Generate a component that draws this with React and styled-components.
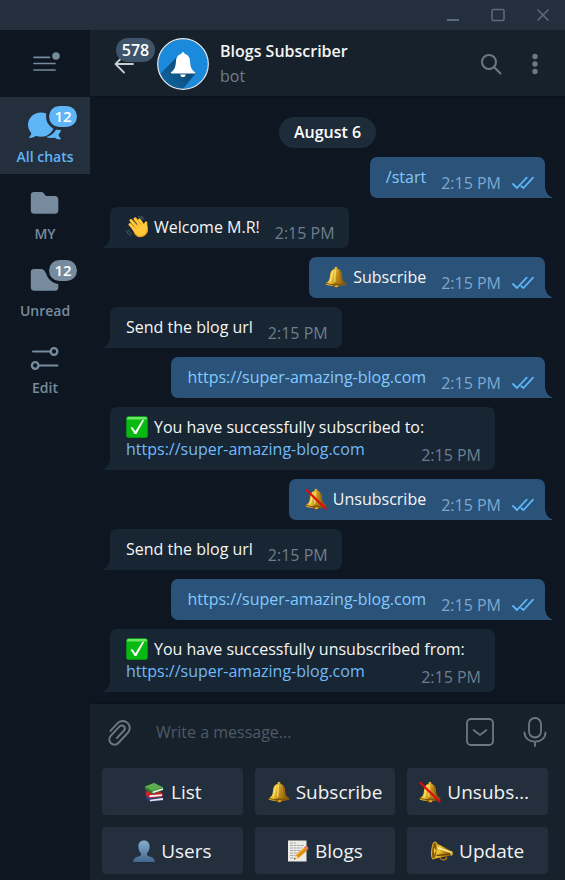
import React from "react";
import styled, { createGlobalStyle, css } from "styled-components";

const color = {
  frame: "#242f3d",
  panel: "#17212b",
  chat: "#0e1621",
  line: "#0b121b",
  incoming: "#182533",
  outgoing: "#2b5278",
  accent: "#5eb5f7",
  link: "#70bafa",
  muted: "#768c9e",
  dim: "#6d7f8f",
};

const GlobalStyle = createGlobalStyle`
  *, *::before, *::after { box-sizing: border-box; }
  body {
    margin: 0;
    background: ${color.chat};
    color: #f5f5f5;
    font: 400 16px/22px "Open Sans", "Noto Sans", sans-serif;
  }
  button, input { font: inherit; color: inherit; }
  svg { display: block; flex: none; }
`;

const Window = styled.div`
  display: flex;
  flex-direction: column;
  min-height: 100vh;
`;

const TitleBar = styled.div`
  display: flex;
  justify-content: flex-end;
  height: 30px;
  background: ${color.frame};
  color: #5c6b79;
`;

const IconButton = styled.button`
  display: flex;
  align-items: center;
  justify-content: center;
  width: ${(p) => p.$width || 44}px;
  height: ${(p) => p.$height || 44}px;
  padding: 0;
  border: 0;
  background: none;
  color: inherit;
  cursor: pointer;
`;

const Body = styled.div`
  display: grid;
  grid-template-columns: 90px minmax(0, 1fr);
  flex: 1;
`;

const Sidebar = styled.nav`
  display: flex;
  flex-direction: column;
  color: ${color.muted};
`;

const FolderButton = styled.button`
  position: relative;
  display: flex;
  flex-direction: column;
  align-items: center;
  gap: 4px;
  height: 77px;
  padding: 14px 0 0;
  border: 0;
  background: ${(p) => (p.$active ? color.frame : color.chat)};
  color: ${(p) => (p.$active ? color.accent : color.muted)};
  font-size: 14px;
  line-height: 20px;
  font-weight: 600;
  cursor: pointer;
`;

const FolderBadge = styled.span`
  position: absolute;
  top: 9px;
  right: 13px;
  min-width: 28px;
  border-radius: 11px;
  background: ${(p) => (p.$active ? color.accent : color.muted)};
  box-shadow: 0 0 0 3px ${(p) => (p.$active ? color.frame : color.chat)};
  color: #fff;
  font-size: 15px;
  line-height: 21px;
  text-align: center;
`;

const Main = styled.main`
  display: flex;
  flex-direction: column;
  min-width: 0;
`;

const Header = styled.header`
  display: flex;
  align-items: center;
  height: 67px;
  padding: 0 8px 0 12px;
  background: ${color.panel};
  color: #6c7883;
`;

const BackButton = styled.button`
  position: relative;
  display: flex;
  align-items: center;
  width: 55px;
  height: 52px;
  padding: 0 0 0 12px;
  border: 0;
  background: none;
  color: #c9cdd1;
  cursor: pointer;
`;

const BackBadge = styled.span`
  position: absolute;
  top: 0;
  left: 14px;
  width: 39px;
  border-radius: 12px;
  background: #3e546a;
  color: #fff;
  font-size: 16px;
  line-height: 24px;
  font-weight: 600;
  text-align: center;
`;

const Peer = styled.div`
  flex: 1;
  min-width: 0;
  padding-left: 11px;
`;

const PeerName = styled.h1`
  margin: 0 0 3px;
  color: #f5f5f5;
  font-size: 16px;
  line-height: 22px;
  font-weight: 600;
`;

const PeerStatus = styled.div`
  color: ${color.dim};
`;

const Messages = styled.section`
  display: flex;
  flex: 1;
  flex-direction: column;
  align-items: flex-start;
  gap: 9px;
  padding: 20px 20px 11px;
  border-top: 1px solid ${color.line};
  margin-top: -1px;
`;

const DatePill = styled.time`
  align-self: center;
  padding: 0 15px;
  border-radius: 16px;
  background: #1e2c3a;
  color: #fff;
  line-height: 31px;
  font-weight: 600;
`;

const outgoing = css`
  align-self: flex-end;
  padding-right: 11px;
  border-radius: 7px 7px 0 7px;
  &::after {
    left: 100%;
    background: radial-gradient(ellipse 7px 11px at 100% 0, transparent 96%, ${color.outgoing});
  }
`;

const incoming = css`
  padding-right: 14px;
  border-radius: 7px 7px 7px 0;
  &::after {
    right: 100%;
    background: radial-gradient(ellipse 7px 11px at 0 0, transparent 96%, ${color.incoming});
  }
`;

const Bubble = styled.article`
  position: relative;
  min-width: ${(p) => (p.$wide ? "min(385px, 100%)" : "0")};
  padding: 9px 0 4px 16px;
  background: ${(p) => (p.$out ? color.outgoing : color.incoming)};
  &::after {
    content: "";
    position: absolute;
    bottom: 0;
    width: 7px;
    height: 12px;
  }
  ${(p) => (p.$out ? outgoing : incoming)}
`;

const TextLine = styled.div`
  display: flex;
  align-items: center;
  gap: 6px;
  min-height: 22px;
`;

const LastLine = styled.div`
  display: flex;
  align-items: flex-start;
  justify-content: space-between;
  gap: 15px;
`;

const Link = styled.a`
  color: ${(p) => (p.$out ? "#83caff" : color.link)};
  text-decoration: none;
`;

const Meta = styled.div`
  display: flex;
  align-items: center;
  gap: 11px;
  margin-top: 6px;
  color: ${(p) => (p.$out ? "#7da8d3" : color.dim)};
  white-space: nowrap;
`;

const Composer = styled.footer`
  padding: 0 17px 6px 12px;
  border-top: 1px solid ${color.line};
  background: ${color.panel};
  color: #6c7883;
`;

const InputRow = styled.form`
  display: flex;
  align-items: center;
  height: 56px;
  margin: 0 -14px 8px -4px;
`;

const MessageInput = styled.input`
  flex: 1;
  min-width: 0;
  padding: 0 0 0 14px;
  border: 0;
  outline: 0;
  background: none;
  color: #f5f5f5;
  &::placeholder { color: #4e5a66; opacity: 1; }
`;

const Keyboard = styled.div`
  display: grid;
  grid-template-columns: repeat(3, minmax(0, 1fr));
  gap: 12px;
`;

const KeyButton = styled.button`
  display: flex;
  align-items: center;
  justify-content: center;
  gap: 6px;
  height: 47px;
  padding: 0 12px;
  border: 0;
  border-radius: 4px;
  background: ${color.frame};
  color: #f0f2f4;
  font-size: 19px;
  line-height: 28px;
  font-weight: 500;
  cursor: pointer;
`;

const KeyLabel = styled.span`
  min-width: 0;
  overflow: hidden;
  text-overflow: ellipsis;
  white-space: nowrap;
`;

const stroke = { fill: "none", stroke: "currentColor", strokeLinecap: "round", strokeLinejoin: "round" };

const Ticks = () => (
  <svg width="22" height="22" viewBox="0 0 22 22" {...stroke} stroke={color.accent} strokeWidth="1.800" role="img" aria-label="Read">
    <path d="M1 12 5 16 14.700 5.700M9.300 14.300 11.500 16 21 5.700" />
  </svg>
);

const BellArt = () => (
  <g>
    <path d="M11 .8c-1.200 0-1.500 1-1.400 2-3.200.9-4.600 3.600-4.700 7.200-.1 3.700-1.400 5.600-4.200 7.200-.5.7 0 1.500 1.300 1.900 5.400 1.300 12.600 1.300 18 0 1.300-.4 1.800-1.200 1.300-1.900-2.800-1.600-4.100-3.500-4.200-7.200-.1-3.600-1.500-6.300-4.700-7.200.1-1-.2-2-1.400-2z" fill="url(#gold)" />
    <ellipse cx="11" cy="19.200" rx="3" ry="2" fill="#8a5c0b" />
    <ellipse cx="11.500" cy="20" rx="1.800" ry="1.200" fill="#e0a624" />
    <path d="M1 17.400c5 1.800 15 1.800 20 0" stroke="#7d5307" strokeWidth="1" fill="none" />
    <path d="M8 5c-1.500 2.500-1 7-2.800 10.500M10.500 4c-.7 3.500-.4 8-.8 12" stroke="#fff08a" strokeWidth="1.200" fill="none" opacity=".75" />
    <path d="M15 5c1.200 3 .5 7 3 11" stroke="#7d5307" strokeWidth="1" fill="none" opacity=".6" />
  </g>
);

const emojiArt = {
  bell: <BellArt />,
  mute: (
    <g>
      <BellArt />
      <path d="M1.500 2 20.500 20.500" stroke="#e20a12" strokeWidth="2.200" strokeLinecap="round" />
    </g>
  ),
  check: (
    <g>
      <rect x=".3" y=".3" width="21.400" height="21.400" rx="2.500" fill="#07b910" />
      <path d="M1 3.500V2.500Q1 1 2.500 1h17Q21 1 21 2.500v1z" fill="#6be468" />
      <path d="M4.500 11.500c1-.6 2-.2 2.600.6l2.200 3.200L16 4.500c.5-.8 1.400-.8 2.200-.4L10.400 18H8.600z" fill="#fff" />
    </g>
  ),
  wave: (
    <g>
      <g fill="none" strokeLinecap="round" stroke="#ffc83a" strokeWidth="3">
        <path d="M4 8.500l6 6.500M5 4.500l7 8M9 2.800l6 7.500M13.500 4l4 6" />
      </g>
      <path d="M5.500 12 14.500 6.500l3.500 3.800c-.2-1.800.1-3.800 1.600-4.700 1-.5 1.900.1 1.700 1.200-.5 2.300 1.200 5.100.2 8.600-1.100 4-5.300 6.400-9 5.200-2.300-.8-4.700-4.300-7-8.600z" fill="#ffc83a" />
      <path d="M8 16.500c1.800 2.500 3.200 4.200 5.200 4.200 4 .2 7.500-2.600 8.200-6" fill="none" stroke="#e79a1c" strokeWidth="1.200" />
      <path d="M5.500 7.600l4.800 5.400M7.500 4.800l5.200 6M11.500 4l4 5.200" fill="none" stroke="#d8901c" strokeWidth=".7" />
      <path d="M.8 15c.6 2 1.800 3.500 3.600 4.500M2.800 14.500c.5 1.400 1.300 2.300 2.600 3.100M12.500.8c1.700.2 3 1 4 2.400M15 .4c1.300.5 2.200 1.200 2.800 2.300" fill="none" stroke="#5c6b77" strokeWidth=".9" strokeLinecap="round" />
    </g>
  ),
  books: (
    <g transform="translate(1 1)">
      <path d="M2 14.500 15.500 13l4 3.200-.4 2.300L6 20l-4-3z" fill="#2c3f78" />
      <path d="M6 17.700 19 16v1.900L6 19.200z" fill="#e9e9ef" />
      <path d="M1.500 9.200 15 8.500l3.800 3.500-.3 2.800L5.200 16.200 1.500 13z" fill="#c7232c" />
      <path d="M5.500 13.200 18 12.200v1.900L5.500 15.200z" fill="#f4f1ef" />
      <path d="M.8 4.500 10 1l9.200 4.500v2.800L8.500 12 .8 7.200z" fill="#2e7d32" />
      <path d="M.8 4.500 10 1l9.200 4.500L8.300 9z" fill="#5cad4c" />
      <path d="M8.700 9.600 19 6.300v1.500L8.700 11.200z" fill="#f3f5ef" />
    </g>
  ),
  user: (
    <g>
      <path d="M11 .6c-3.700 0-5.800 2.700-5.600 6.300.2 3 1.200 5.200 2.600 6.400.4 1.800-.3 2.500-2.600 3.200C2.200 17.500.5 18.500.2 22h21.600c-.3-3.500-2-4.500-5.200-5.500-2.300-.7-3-1.400-2.600-3.200 1.400-1.200 2.400-3.400 2.600-6.400C16.800 3.300 14.700.6 11 .6z" fill="url(#person)" />
    </g>
  ),
  memo: (
    <g>
      <rect x="1" y=".5" width="18.500" height="21" fill="#eceae6" />
      <path d="M3 3h6M3 5.500h14M3 8h12M3 10.500h13M3 13h8M3 15.500h6M3 18h4" stroke="#9a9a9a" strokeWidth=".8" strokeDasharray="3 .6" />
      <path d="M7 19.500 8.800 15 17 7.500l3 3L11.500 18z" fill="#f2b21d" />
      <path d="M9 15.800 18 8.500l1.900 2L11 18.200z" fill="#dd8f12" />
      <path d="M17 7.500l1.300-1.300c1.800-.6 3.500 1 3 2.800L20 10.500z" fill="#e8716b" />
      <path d="M7 19.500 8.800 15l2.700 3z" fill="#f3d9a8" />
      <path d="M7 19.500l.7-1.700 1 1.100z" fill="#222" />
    </g>
  ),
  horn: (
    <g>
      <path d="M8.500 16c.5 3 2.500 4.200 4.800 3.800 1.700-.3 2.400-1.500 2.200-3" fill="none" stroke="#b17a0c" strokeWidth="1.300" />
      <path d="M3.800 2.500 20.500 11c1.800.8 1.600 4.400-.2 4.600L2.500 18.800z" fill="url(#gold)" />
      <path d="M6 7.500l14.500 5" stroke="#fff3a0" strokeWidth="1.400" />
      <path d="M5 15.500l15-1.500" stroke="#6c4906" strokeWidth="1.500" />
      <ellipse cx="3.300" cy="10.500" rx="2.600" ry="8.500" transform="rotate(6 3.300 10.500)" fill="#8b5f0a" stroke="#e8b42e" strokeWidth="1" />
      <path d="M3 7.500 5 10.800l-2 3.500" fill="#f7d048" />
      <ellipse cx="20.500" cy="13.300" rx="1.200" ry="2.400" fill="#e8b42e" />
    </g>
  ),
};

const Emoji = ({ name }) => (
  <svg width="22" height="22" viewBox="0 0 22 22" aria-hidden="true">
    {emojiArt[name]}
  </svg>
);

const Gradients = () => (
  <svg width="0" height="0" aria-hidden="true">
    <defs>
      <linearGradient id="gold" x1="0" x2="1" y1="0" y2=".3">
        <stop offset="0" stopColor="#b77c0c" />
        <stop offset=".4" stopColor="#f0c93a" />
        <stop offset=".65" stopColor="#c08a18" />
        <stop offset="1" stopColor="#8a620e" />
      </linearGradient>
      <linearGradient id="person" x1="0" x2="0" y1="0" y2="1">
        <stop offset="0" stopColor="#84aed0" />
        <stop offset="1" stopColor="#42678e" />
      </linearGradient>
    </defs>
  </svg>
);

const folderIcons = {
  chats: (
    <g fill="currentColor">
      <path d="M20 1.500C12.800 1.500 7 7 7 13.800c0 3.200 1.300 6 3.300 8.100-.2 1.700-.9 3-2.100 4.100-.4.500-.1 1 .5 1 2.700-.1 4.700-.9 6-2.200 1.700.7 3.400 1 5.300 1 7.200 0 13-5.400 13-12.100S27.200 1.500 20 1.500z" />
      <path d="M35.500 8c3 2 4.900 5 4.900 8.600 0 2.700-1.100 5-2.800 6.900.2 1.400.8 2.600 1.900 3.600.5.600.3 1.300-.5 1.300-2.400 0-4.200-.8-5.500-2-2.800 1-5.800.8-8.300-.4 6.400-1.600 10.900-6.400 10.900-12.500 0-2-.2-3.800-.6-5.500z" />
    </g>
  ),
  folder: (
    <path fill="currentColor" d="M13 4h7.200c1 0 1.700.3 2.300 1l2 2.500c.3.400.7.500 1.200.5H34c2 0 3.300 1.300 3.300 3.300V22.500c0 2-1.300 3.300-3.300 3.300H13.200c-2 0-3.400-1.300-3.400-3.300V7.200C9.800 5.200 11.100 4 13 4z" />
  ),
  unread: (
    <path fill="currentColor" d="M13 4h7.200c2 0 3 1.400 4 2.900 2.100 3.300 4.200 8.300 8.600 9.700 1.400.5 2.900.7 4.500.7v5.200c0 2-1.300 3.300-3.300 3.300H13.200c-2 0-3.400-1.300-3.400-3.300V7.200C9.800 5.200 11.100 4 13 4z" />
  ),
  edit: (
    <g {...stroke} strokeWidth="2">
      <path d="M12 9.500h17M18 23.500h18.500" />
      <circle cx="33" cy="9.500" r="3.300" strokeWidth="2.300" />
      <circle cx="14.200" cy="23.500" r="3.300" strokeWidth="2.300" />
    </g>
  ),
};

const folders = [
  { icon: "chats", label: "All chats", badge: 12, active: true },
  { icon: "folder", label: "MY" },
  { icon: "unread", label: "Unread", badge: 12 },
  { icon: "edit", label: "Edit" },
];

const BLOG = "https://super-amazing-blog.com";

const messages = [
  { out: true, link: "/start" },
  { emoji: "wave", text: "Welcome M.R!" },
  { out: true, emoji: "bell", text: "Subscribe" },
  { text: "Send the blog url" },
  { out: true, link: BLOG },
  { lead: "You have successfully subscribed to:", link: BLOG },
  { out: true, emoji: "mute", text: "Unsubscribe" },
  { text: "Send the blog url" },
  { out: true, link: BLOG },
  { lead: "You have successfully unsubscribed from:", link: BLOG },
];

const keys = [
  { emoji: "books", label: "List" },
  { emoji: "bell", label: "Subscribe" },
  { emoji: "mute", label: "Unsubscribe" },
  { emoji: "user", label: "Users" },
  { emoji: "memo", label: "Blogs" },
  { emoji: "horn", label: "Update" },
];

const Message = ({ out, emoji, text, lead, link }) => (
  <Bubble $out={out} $wide={Boolean(lead)}>
    {lead && (
      <TextLine>
        <Emoji name="check" />
        {lead}
      </TextLine>
    )}
    <LastLine>
      <TextLine>
        {emoji && <Emoji name={emoji} />}
        {link ? <Link $out={out} href={link.startsWith("/") ? "#start" : link}>{link}</Link> : text}
      </TextLine>
      <Meta $out={out}>
        <time>2:15 PM</time>
        {out && <Ticks />}
      </Meta>
    </LastLine>
  </Bubble>
);

const Avatar = () => (
  <svg width="52" height="52" viewBox="0 0 52 52" role="img" aria-label="Blogs Subscriber">
    <defs>
      <clipPath id="disc"><circle cx="26" cy="26" r="25" /></clipPath>
      <linearGradient id="shade" x1="1" y1="0" x2="0" y2="1">
        <stop offset=".3" stopColor="#0d4d7d" />
        <stop offset="1" stopColor="#1474b8" />
      </linearGradient>
    </defs>
    <circle cx="26" cy="26" r="25" fill="#1c8adb" />
    <path clipPath="url(#disc)" d="M20 19-2 41l20 20L38 36z" fill="url(#shade)" />
    <path d="M26 14c-1 0-1.500.8-1.400 1.800-3.600.8-5.500 3.700-5.700 8-.2 4.400-1.200 8-4.700 10.300-.6.500-.4 1.400.5 1.400h22.600c.9 0 1.100-.9.500-1.400-3.500-2.300-4.500-5.900-4.700-10.300-.2-4.300-2.100-7.200-5.700-8 .1-1-.4-1.800-1.400-1.800z" fill="#fff" />
    <path d="M23.300 36.500h5.400c0 3.400-5.400 3.400-5.400 0z" fill="#fff" />
    <circle cx="26" cy="26" r="25.300" fill="none" stroke="#e8eef3" strokeWidth="1.200" />
  </svg>
);

export default function App() {
  return (
    <Window>
      <GlobalStyle />
      <TitleBar>
        <IconButton $width={45} $height={30} aria-label="Minimize">
          <svg width="14" height="14" viewBox="0 0 14 14"><path d="M1 12h12" stroke="currentColor" strokeWidth="2" /></svg>
        </IconButton>
        <IconButton $width={45} $height={30} aria-label="Maximize">
          <svg width="14" height="14" viewBox="0 0 14 14"><rect x="1" y="1.500" width="12" height="11" rx="1" fill="none" stroke="currentColor" strokeWidth="1.500" /></svg>
        </IconButton>
        <IconButton $width={45} $height={30} aria-label="Close">
          <svg width="14" height="14" viewBox="0 0 14 14"><path d="M1.500 1.500l11 11M12.500 1.500l-11 11" stroke="currentColor" strokeWidth="1.500" /></svg>
        </IconButton>
      </TitleBar>
      <Body>
        <Sidebar aria-label="Folders">
          <IconButton $width={90} $height={67} aria-label="Menu">
            <svg width="30" height="26" viewBox="0 0 30 26">
              <path d="M4 6.300h15.500M4 12.500h21M4 19h21" {...stroke} strokeWidth="1.700" />
              <circle cx="26" cy="5" r="3.800" fill="currentColor" />
            </svg>
          </IconButton>
          {folders.map((f) => (
            <FolderButton key={f.label} $active={f.active} aria-current={f.active ? "page" : undefined}>
              <svg width="48" height="32" viewBox="0 0 48 32" aria-hidden="true">{folderIcons[f.icon]}</svg>
              {f.label}
              {f.badge && <FolderBadge $active={f.active}>{f.badge}</FolderBadge>}
            </FolderButton>
          ))}
        </Sidebar>
        <Main>
          <Header>
            <BackButton aria-label="Back, 578 unread">
              <svg width="22" height="20" viewBox="0 0 22 20"><path d="M19 10H1.500M10 1.500 1.500 10l8.500 8.500" {...stroke} strokeWidth="1.800" /></svg>
              <BackBadge>578</BackBadge>
            </BackButton>
            <Avatar />
            <Peer>
              <PeerName>Blogs Subscriber</PeerName>
              <PeerStatus>bot</PeerStatus>
            </Peer>
            <IconButton aria-label="Search">
              <svg width="22" height="22" viewBox="0 0 22 22"><g {...stroke} strokeWidth="2"><circle cx="9" cy="9" r="7" /><path d="M14.200 14.200 20.500 20.500" /></g></svg>
            </IconButton>
            <IconButton aria-label="More">
              <svg width="6" height="22" viewBox="0 0 6 22" fill="currentColor"><circle cx="3" cy="3.500" r="2.700" /><circle cx="3" cy="11" r="2.700" /><circle cx="3" cy="18.500" r="2.700" /></svg>
            </IconButton>
          </Header>
          <Messages>
            <DatePill>August 6</DatePill>
            {messages.map((m, i) => <Message key={i} {...m} />)}
          </Messages>
          <Composer>
            <InputRow onSubmit={(e) => e.preventDefault()}>
              <IconButton type="button" aria-label="Attach">
                <svg width="26" height="28" viewBox="0 0 26 28" {...stroke} strokeWidth="1.900">
                  <path transform="translate(12 14) rotate(43)" d="M-7 5V-5.500A7 7 0 0 1 7-5.500V8.500A5.200 5.200 0 0 1-3.400 8.500V-4.500A3 3 0 0 1 2.600-4.500V6" />
                </svg>
              </IconButton>
              <MessageInput aria-label="Message" placeholder="Write a message..." />
              <IconButton type="button" $width={55} aria-label="Toggle bot keyboard">
                <svg width="28" height="28" viewBox="0 0 28 28" {...stroke} strokeWidth="1.800"><rect x="1" y="1" width="26" height="26" rx="4" /><path d="M7.500 12 14 17l6.500-5" strokeWidth="1.600" /></svg>
              </IconButton>
              <IconButton type="button" $width={55} aria-label="Record voice message">
                <svg width="24" height="30" viewBox="0 0 24 30" {...stroke} strokeWidth="1.800"><rect x="6" y="1" width="12" height="19.500" rx="6" /><path d="M1.500 15.500c0 5.500 4.500 9.200 10.500 9.200s10.500-3.700 10.500-9.200M12 24.700V29" /></svg>
              </IconButton>
            </InputRow>
            <Keyboard>
              {keys.map((k) => (
                <KeyButton key={k.label} type="button">
                  <Emoji name={k.emoji} />
                  <KeyLabel>{k.label}</KeyLabel>
                </KeyButton>
              ))}
            </Keyboard>
          </Composer>
        </Main>
      </Body>
      <Gradients />
    </Window>
  );
}
